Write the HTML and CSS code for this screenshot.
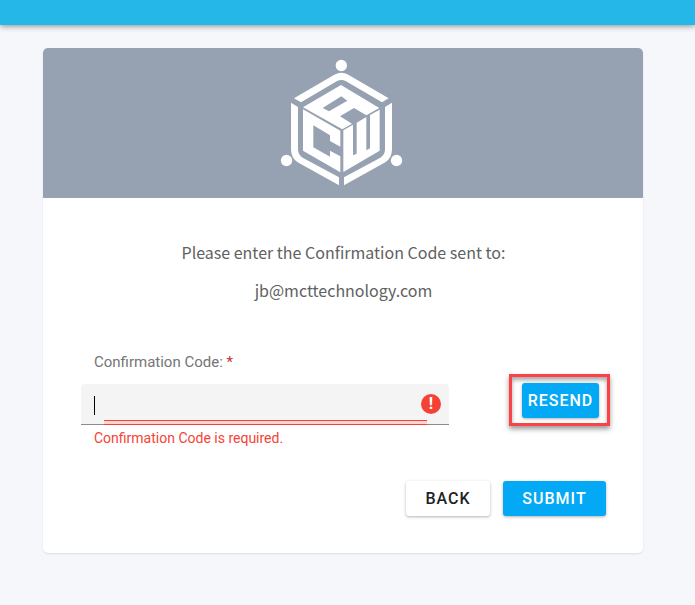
FILE: index.html
```html
<!DOCTYPE html>
<html lang="en">
<head>
  <title>Confirmation Code</title>
  <meta charset="UTF-8" />
  <meta name="viewport" content="width=device-width, initial-scale=1" />
  <link rel="stylesheet" href="styles.css">
</head>
<body>
  <header class="toolbar"></header>

  <main class="card">
    <div class="banner">
      <svg class="logo" viewBox="30 27 378 381" fill="#fff" role="img" aria-label="ACW">
        <!-- corner dots -->
        <circle cx="214" cy="46.500" r="17" />
        <circle cx="49.500" cy="331.500" r="17" />
        <circle cx="379.500" cy="331.500" r="17" />
        <!-- outer frame -->
        <path d="M72 145 L193 74 Q214 62 235 74 L356 145 L336 157 L228 94 Q214 86 200 94 L93 157 Z" />
        <path d="M63 158 L84 171 L84 298 Q84 314 98 323 L207 382 L207 406 L83 337 Q63 324 63 298 Z" />
        <path d="M366 158 L345 171 L345 298 Q345 314 331 323 L222 382 L222 406 L346 337 Q366 324 366 298 Z" />
        <!-- cube faces -->
        <path fill-rule="evenodd" d="M99 172 L213 105 L328 174 L289 196 L252 174 L210 199 L246 221 L217 238 Z M158 174 L177 184 L232 152 L214 139 Z" />
        <path d="M99 178 L211 242 L211 290 L180 273 L180 256 L130 226 L130 292 L180 320 L180 302 L211 319 L211 367 L99 302 Z" />
        <path d="M220 241 L249 224 L249 316 L260 311 L260 218 L289 201 L289 301 L300 295 L300 195 L329 179 L329 302 L220 366 Z" />
      </svg>
    </div>

    <form class="confirm-form" novalidate>
      <div class="intro">
        <p>Please enter the Confirmation Code sent to:</p>
        <p>jb@mcttechnology.com</p>
      </div>

      <div class="code-row">
        <div class="field">
          <label for="code">Confirmation Code: <span class="required">*</span></label>
          <div class="input-box">
            <input type="text" id="code" aria-describedby="codeError" />
            <span class="caret"></span>
            <span class="error-icon">!</span>
          </div>
          <div class="error-text" id="codeError">Confirmation Code is required.</div>
        </div>
        <div class="highlight">
          <button type="button" class="btn btn-primary btn-resend">RESEND</button>
        </div>
      </div>

      <div class="actions">
        <button type="button" class="btn btn-back">BACK</button>
        <button type="submit" class="btn btn-primary btn-submit">SUBMIT</button>
      </div>
    </form>
  </main>
</body>
</html>
```
FILE: styles.css
```css
* { box-sizing: border-box; }
body { margin: 0; background: #f5f7fb; font-family: Roboto, sans-serif; font-size: 15px; }

.toolbar { height: 25px; background: #24b7e7; box-shadow: 0 1px 6px rgba(0, 0, 0, 0.45); }

.card { margin: 23px 52px 32px 43px; background: #fff; border-radius: 5px; box-shadow: 0 1px 2px rgba(40, 50, 80, 0.12); overflow: hidden; }
.banner { display: flex; justify-content: center; padding: 11px 0 12px; background: #96a1b1; }
.logo { display: block; width: 126px; height: 127px; }

.confirm-form { padding: 42px 37px 37px 38px; }
.intro { text-align: center; font-family: "Noto Sans CJK SC", sans-serif; font-size: 16px; line-height: 24px; color: #616161; }
.intro p { margin: 0 0 14px; }

.code-row { display: flex; justify-content: space-between; align-items: flex-start; margin-top: 50px; }
.field { flex: 0 1 368px; }
.field label { display: block; padding-left: 13px; line-height: 20px; margin-bottom: 12px; color: #757575; }
.required { color: #c9302c; }

.input-box { position: relative; }
.input-box input { display: block; width: 100%; height: 41px; padding: 0 40px 0 13px; border: 0; border-bottom: 1px solid #8c8c8c; border-radius: 4px 4px 0 0; background: #f4f4f4; font: inherit; outline: none; }
/* red underline still growing out from the middle */
.input-box::after { content: ""; position: absolute; z-index: 1; left: 23px; right: 22px; bottom: 0; height: 3px; border: solid #f44336; border-width: 1px 0; background: #f9d5d2; }
.caret { position: absolute; left: 13px; top: 12px; width: 1px; height: 19px; background: #000; }
.error-icon { position: absolute; right: 8px; top: 10px; width: 20px; height: 20px; border-radius: 50%; background: #f44336; color: #fff; font-size: 16px; font-weight: 700; line-height: 20px; text-align: center; }
.error-text { padding: 4px 0 0 13px; font-size: 14px; line-height: 18px; color: #f44336; }

.btn { height: 35px; padding: 0; border: 0; border-radius: 3px; font-family: Roboto, sans-serif; font-size: 16px; font-weight: 500; letter-spacing: 1px; box-shadow: 0 1px 3px rgba(0, 0, 0, 0.3); }
.btn-primary { background: #03a9f4; color: #fff; }
.btn-resend { display: block; width: 77px; }
.btn-back { width: 84px; background: #fff; color: #212121; }
.btn-submit { width: 103px; }

.highlight { position: relative; margin: 31px 7px 0 0; }
.highlight::before { content: ""; position: absolute; top: -9px; right: -11px; bottom: -8px; left: -13px; border: 3px solid #fb4347; box-shadow: 0 3px 5px rgba(0, 0, 0, 0.4), inset 0 3px 4px rgba(0, 0, 0, 0.35); }
.highlight .btn { position: relative; }

.actions { display: flex; justify-content: flex-end; gap: 13px; margin-top: 34px; }
```
